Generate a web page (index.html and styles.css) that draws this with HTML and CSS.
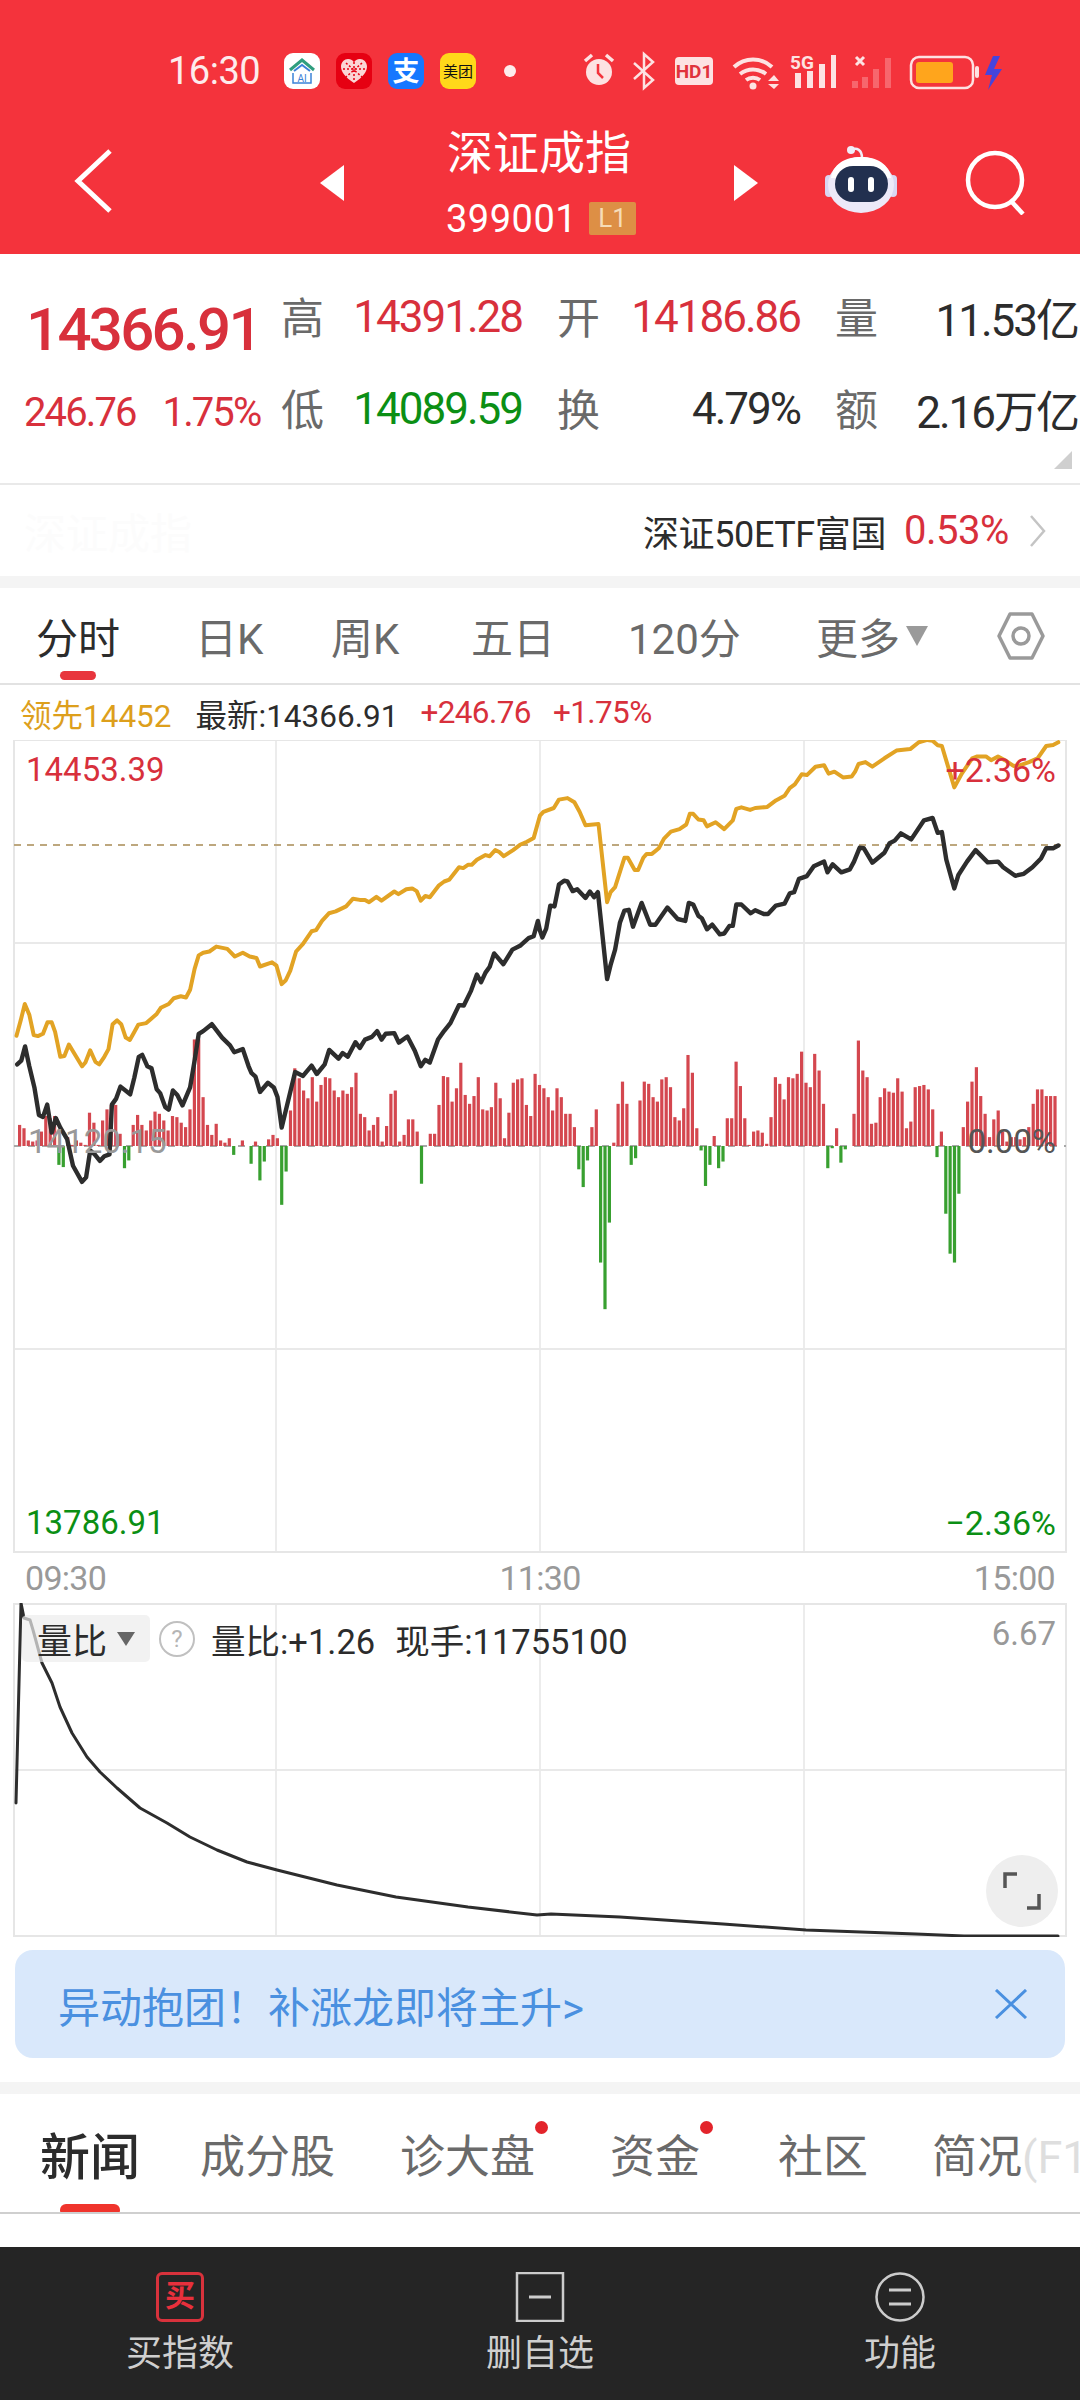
FILE: index.html
```html
<!DOCTYPE html>
<html lang="zh-CN">
<head>
    <meta charset="UTF-8">
    <meta name="viewport" content="width=device-width, initial-scale=1.0">
    <title>深证成指</title>
    <link rel="stylesheet" href="styles.css">
</head>
<body>
    <header class="top">
        <div class="status">
            <span class="status-time">16:30</span>
            <div class="app-icons">
                <svg class="app-icon" viewBox="0 0 36 36"><rect width="36" height="36" rx="9" fill="#fff"/><path d="M6 17 18 7l12 10" fill="none" stroke="#2f9e7e" stroke-width="3"/><path d="M10 18l8-6 8 6" fill="none" stroke="#3b82d8" stroke-width="2"/><path d="M9 20v10h18V20" fill="none" stroke="#3b82d8" stroke-width="1.5"/><text x="18" y="29" class="app-text" font-size="10" fill="#3b82d8">AI</text></svg>
                <svg class="app-icon" viewBox="0 0 36 36"><rect width="36" height="36" rx="9" fill="#e60012"/><path d="M18 30C9 24 5 19 5 13.500 5 9 8.500 6 12 6c3 0 5 1.500 6 3.500C19 7.500 21 6 24 6c3.500 0 7 3 7 7.500C31 19 27 24 18 30Z" fill="#fbd5d5"/><path d="M10 10l16 14M26 10 10 24M18 9v18M7 16h22" stroke="#e60012" stroke-width="1.500" stroke-dasharray="2 2"/></svg>
                <svg class="app-icon" viewBox="0 0 36 36"><rect width="36" height="36" rx="9" fill="#1677ff"/><text x="18" y="28" class="app-text" font-size="27" font-weight="700" fill="#fff">支</text></svg>
                <svg class="app-icon" viewBox="0 0 36 36"><rect width="36" height="36" rx="9" fill="#ffd81a"/><text x="18" y="24" class="app-text" font-size="15" fill="#111">美团</text></svg>
            </div>
            <span class="status-dot"></span>
            <svg class="tray" viewBox="0 0 421 40">
                <!-- alarm -->
                <circle cx="17" cy="21" r="13" fill="#fde2e2"/>
                <path d="M3 10l7-6M31 10l-7-6" stroke="#fde2e2" stroke-width="3.500"/>
                <path d="M16 13v9l5 5" fill="none" stroke="#f4333c" stroke-width="2.500"/>
                <!-- bluetooth -->
                <path d="M52 12l19 17-9 8V3l9 8-19 17" fill="none" stroke="#fde2e2" stroke-width="2.500"/>
                <!-- hd call -->
                <rect x="93" y="6" width="38" height="28" rx="4" fill="#fde2e2"/>
                <text x="112" y="27" class="tray-hd">HD1</text>
                <!-- wifi -->
                <path d="M152 16c11-10 27-10 38 0M158 23c8-6 18-6 26 0M164 29c4-3 10-3 14 0" fill="none" stroke="#fde2e2" stroke-width="4"/>
                <circle cx="171" cy="35" r="3.500" fill="#fde2e2"/>
                <path d="M186 30l6-6 5 6ZM186 33l6 5 5-5Z" fill="#fde2e2"/>
                <!-- 5g signal -->
                <text x="208" y="18" class="tray-5g">5G</text>
                <path d="M213 22h6v15h-6ZM225 20h6v17h-6ZM237 13h6v24h-6ZM249 4h5v33h-5Z" fill="#fde2e2"/>
                <!-- second sim, no service -->
                <path d="M274 6l8 8M282 6l-8 8" stroke="#fde2e2" stroke-width="3"/>
                <path d="M270 30h6v7h-6ZM280 26h6v11h-6ZM291 18h6v19h-6ZM303 7h6v30h-6Z" fill="#fff" fill-opacity=".25"/>
                <!-- battery -->
                <rect x="329" y="6" width="62" height="31" rx="8" fill="none" stroke="#fde2e2" stroke-width="2.500"/>
                <rect x="334" y="11" width="37" height="21" rx="3" fill="#ffa51c"/>
                <rect x="393" y="15" width="4" height="12" rx="2" fill="#fde2e2"/>
                <path d="M411 5l-8 19h7l-4 15 14-21h-8l6-13Z" fill="#4644dc"/>
            </svg>
        </div>
        <div class="nav">
            <svg class="nav-back" viewBox="0 0 50 70"><path d="M40 4 8 34l32 30" fill="none" stroke="#fff" stroke-width="5"/></svg>
            <svg class="nav-arrow" viewBox="0 0 24 36"><path d="M24 0v36L0 18Z" fill="#fff"/></svg>
            <div class="nav-title">
                <h1>深证成指</h1>
                <div class="nav-code">399001 <span class="level-badge">L1</span></div>
            </div>
            <svg class="nav-arrow" viewBox="0 0 24 36"><path d="M0 0v36l24-18Z" fill="#fff"/></svg>
            <svg class="nav-robot" viewBox="0 0 72 68">
                <path d="M26 4c6-3 11 0 11 8" fill="none" stroke="#f0eef8" stroke-width="2.500"/>
                <circle cx="26" cy="4" r="4" fill="#f0eef8"/>
                <rect x="0" y="29" width="8" height="22" rx="4" fill="#d9d6f2"/>
                <rect x="64" y="29" width="8" height="22" rx="4" fill="#d9d6f2"/>
                <ellipse cx="36" cy="39" rx="33" ry="28" fill="#ece9f8"/>
                <path d="M6 32C8 18 20 11 36 11s28 7 30 21Z" fill="#fff"/>
                <rect x="10" y="20" width="53" height="36" rx="18" fill="#22304f"/>
                <rect x="23" y="31" width="6" height="15" rx="3" fill="#fff"/>
                <rect x="43" y="31" width="6" height="15" rx="3" fill="#fff"/>
            </svg>
            <svg class="nav-search" viewBox="0 0 62 66"><circle cx="30" cy="31" r="27" fill="none" stroke="#fff" stroke-width="4.500"/><path d="M46 52l12 13" stroke="#fff" stroke-width="4.500"/></svg>
        </div>
    </header>

    <section class="quote">
        <div class="quote-price">14366.91</div>
        <div class="quote-label">高</div>
        <div class="quote-value up">14391.28</div>
        <div class="quote-label">开</div>
        <div class="quote-value up">14186.86</div>
        <div class="quote-label">量</div>
        <div class="quote-value">11.53亿</div>

        <div class="quote-change"><span>246.76</span><span>1.75%</span></div>
        <div class="quote-label">低</div>
        <div class="quote-value down">14089.59</div>
        <div class="quote-label">换</div>
        <div class="quote-value">4.79%</div>
        <div class="quote-label">额</div>
        <div class="quote-value">2.16万亿</div>
        <span class="quote-fold"></span>
    </section>

    <section class="etf-row">
        <span class="etf-ghost">深证成指</span>
        <span class="etf-name">深证50ETF富国</span>
        <span class="etf-change">0.53%</span>
        <svg class="etf-more" viewBox="0 0 18 34"><path d="M2 2l13 15L2 32" fill="none" stroke="#c4c4c4" stroke-width="2.500"/></svg>
    </section>

    <nav class="period-tabs">
        <a class="period active">分时</a>
        <a class="period">日K</a>
        <a class="period">周K</a>
        <a class="period">五日</a>
        <a class="period">120分</a>
        <a class="period">更多<i class="caret"></i></a>
        <svg class="period-gear" viewBox="0 0 48 50"><path d="M13 3h22l11 22-11 22H13L2 25Z" fill="none" stroke="#9a9a9a" stroke-width="3.500" stroke-linejoin="round"/><circle cx="24" cy="25" r="8" fill="none" stroke="#9a9a9a" stroke-width="3.500"/></svg>
    </nav>

    <div class="legend">
        <span class="legend-lead">领先14452</span>
        <span class="legend-last">最新:14366.91</span>
        <span class="legend-delta up">+246.76</span>
        <span class="legend-delta up">+1.75%</span>
    </div>

    <section class="chart-main">
        <svg id="priceChart" class="chart-svg" viewBox="13 740 1054 813"></svg>
        <span class="tag tag-tl up">14453.39</span>
        <span class="tag tag-tr up">+2.36%</span>
        <span class="tag tag-ml">14120.15</span>
        <span class="tag tag-mr">0.00%</span>
        <span class="tag tag-bl down">13786.91</span>
        <span class="tag tag-br down">−2.36%</span>
    </section>

    <div class="time-axis">
        <span>09:30</span>
        <span>11:30</span>
        <span>15:00</span>
    </div>

    <section class="chart-ratio">
        <svg id="ratioChart" class="chart-svg" viewBox="13 1603 1054 334"></svg>
        <div class="ratio-head">
            <span class="ratio-select">量比<i class="caret caret-dark"></i></span>
            <span class="ratio-help">?</span>
            <span class="ratio-info">量比:+1.26</span>
            <span class="ratio-info">现手:11755100</span>
        </div>
        <span class="ratio-max">6.67</span>
        <span class="ratio-expand">
            <svg viewBox="0 0 38 38"><path d="M14 2H2v14M24 36h12V22" fill="none" stroke="#555" stroke-width="3.500"/></svg>
        </span>
    </section>

    <div class="promo">
        <span class="promo-text">异动抱团！补涨龙即将主升&gt;</span>
        <svg class="promo-close" viewBox="0 0 34 30"><path d="M2 1l30 28M32 1 2 29" stroke="#4a90e0" stroke-width="3"/></svg>
    </div>

    <nav class="news-tabs">
        <a class="news-tab active">新闻</a>
        <a class="news-tab">成分股</a>
        <a class="news-tab dotted">诊大盘</a>
        <a class="news-tab dotted">资金</a>
        <a class="news-tab">社区</a>
        <a class="news-tab">简况<span class="news-fade">(F10)</span></a>
    </nav>

    <footer class="toolbar">
        <a class="tool">
            <span class="tool-buy">买</span>
            <span>买指数</span>
        </a>
        <a class="tool">
            <svg class="tool-icon" viewBox="0 0 50 50"><path d="M2 1h46v48H2Z" fill="none" stroke="#ccc" stroke-width="2.500"/><path d="M14 25h22" stroke="#ccc" stroke-width="3"/></svg>
            <span>删自选</span>
        </a>
        <a class="tool">
            <svg class="tool-icon" viewBox="0 0 50 50"><circle cx="25" cy="25" r="23.500" fill="none" stroke="#ccc" stroke-width="2.500"/><path d="M14 18h22M14 32h22" stroke="#ccc" stroke-width="3"/></svg>
            <span>功能</span>
        </a>
    </footer>

    <script src="chart.js"></script>
</body>
</html>
```

FILE: styles.css
```css
:root {
    --red: #f4333c;
    --up: #d8303c;
    --down: #0b8f14;
    --text: #2c2c2c;
    --muted: #6a6a6a;
    --line: #e9e9e9;
    --band: #f4f4f4;
}

* {
    margin: 0;
    padding: 0;
    box-sizing: border-box;
    font-family: Roboto, "Noto Sans CJK SC", sans-serif;
}

body {
    width: 1080px;
    height: 2400px;
    overflow: hidden;
    background-color: white;
    color: var(--text);
}

.up { color: var(--up); }
.down { color: var(--down); }

/* header */
.top {
    height: 254px;
    background-color: var(--red);
    color: white;
}

.status {
    display: flex;
    align-items: center;
    height: 40px;
    padding-left: 168px;
    transform: translateY(51px);
}

.status-time {
    width: 92px;
    font-size: 38px;
    letter-spacing: -0.5px;
    color: #fdecec;
}

.app-icons {
    display: flex;
    gap: 16px;
    margin-left: 24px;
}

.app-icon {
    width: 36px;
    height: 36px;
}

.app-text {
    text-anchor: middle;
}

.status-dot {
    width: 12px;
    height: 12px;
    margin-left: 28px;
    border-radius: 50%;
    background-color: #fdecec;
}

.tray {
    width: 421px;
    height: 40px;
    margin-left: 66px;
}

.tray-hd {
    font-size: 19px;
    font-weight: 700;
    text-anchor: middle;
    fill: #e0333c;
}

.tray-5g {
    font-size: 19px;
    font-weight: 700;
    fill: #fde2e2;
}

.nav {
    display: flex;
    align-items: center;
    height: 130px;
    margin-top: 77px;
    padding-left: 70px;
}

.nav-back {
    width: 50px;
    height: 70px;
}

.nav-arrow {
    width: 24px;
    height: 36px;
    margin-left: 200px;
    transform: translateY(1px);
}

.nav-title {
    align-self: flex-start;
    width: 390px;
    margin-right: -200px;
    padding-top: 5px;
    text-align: center;
}

.nav-title h1 {
    font-size: 46px;
    font-weight: 400;
    line-height: 62px;
}

.nav-code {
    margin-top: 10px;
    margin-left: 4px;
    font-size: 38px;
    line-height: 50px;
    letter-spacing: 0.5px;
}

.level-badge {
    display: inline-block;
    width: 47px;
    height: 33px;
    margin-left: 2px;
    background-color: #dd8f45;
    border-radius: 2px;
    color: #f6dcb8;
    font-size: 26px;
    line-height: 33px;
    letter-spacing: 0;
    vertical-align: 5px;
}

.nav-robot {
    width: 72px;
    height: 68px;
    margin-top: -4px;
    margin-left: 67px;
}

.nav-search {
    width: 62px;
    height: 66px;
    margin-left: 68px;
}

/* quote table */
.quote {
    position: relative;
    display: grid;
    grid-template-columns: 220px 82px 194px 82px 196px 82px 1fr;
    grid-auto-rows: 92px;
    align-items: center;
    height: 231px;
    padding: 17px 2px 0 26px;
    border-bottom: 2px solid var(--line);
}

.quote-price {
    margin-top: 24px;
    font-size: 60px;
    font-weight: 500;
    letter-spacing: -2.7px;
    white-space: nowrap;
    color: var(--up);
}

.quote-label {
    padding: 0 4px 4px 0;
    font-size: 43px;
    text-align: right;
    color: var(--muted);
}

.quote-value {
    font-size: 44px;
    letter-spacing: -2px;
    text-align: right;
    white-space: nowrap;
}

.quote-change {
    display: flex;
    gap: 27px;
    margin-top: 6px;
    margin-left: -2px;
    font-size: 40px;
    letter-spacing: -1.9px;
    white-space: nowrap;
    color: var(--up);
}

.quote-fold {
    position: absolute;
    right: 8px;
    bottom: 14px;
    border-left: 18px solid transparent;
    border-bottom: 18px solid #cfcfcf;
}

/* related etf */
.etf-row {
    display: flex;
    align-items: center;
    height: 91px;
    padding-left: 24px;
}

.etf-ghost {
    font-size: 42px;
    color: #fcfcfc;
}

.etf-name {
    margin-left: 451px;
    font-size: 36px;
    letter-spacing: -0.4px;
}

.etf-change {
    margin-left: 18px;
    font-size: 40px;
    letter-spacing: -0.5px;
    color: var(--up);
}

.etf-more {
    width: 18px;
    height: 34px;
    margin-left: 20px;
}

/* period tabs */
.period-tabs {
    display: grid;
    grid-template-columns: 159px 136px 140px 157px 188px 179px 50px;
    align-items: center;
    height: 109px;
    padding-left: 36px;
    border-top: 12px solid var(--band);
    border-bottom: 2px solid #e2e2e2;
}

.period {
    position: relative;
    font-size: 42px;
    color: var(--muted);
    white-space: nowrap;
}

.period.active {
    color: var(--text);
}

.period.active::after {
    content: "";
    position: absolute;
    left: 24px;
    top: 66px;
    width: 36px;
    height: 9px;
    border-radius: 5px;
    background-color: #e8353d;
}

.caret {
    display: inline-block;
    margin-left: 6px;
    border-left: 11px solid transparent;
    border-right: 11px solid transparent;
    border-top: 20px solid #9a9a9a;
    vertical-align: 8px;
}

.caret-dark {
    border-left-width: 9px;
    border-right-width: 9px;
    border-top: 14px solid #666;
    margin-left: 10px;
    vertical-align: 6px;
}

.period-gear {
    width: 48px;
    height: 50px;
    margin-left: 2px;
}

.legend {
    display: flex;
    align-items: center;
    gap: 24px;
    height: 55px;
    padding-left: 20px;
    font-size: 31.5px;
}

.legend-lead {
    color: #dd9f1c;
}

.legend-delta {
    margin-left: -2px;
    letter-spacing: -0.6px;
}

/* price chart */
.chart-main {
    position: relative;
    width: 1054px;
    height: 813px;
    margin-left: 13px;
}

.chart-svg {
    display: block;
    width: 100%;
    height: 100%;
}

.tag {
    position: absolute;
    font-size: 33px;
    line-height: 38px;
}

.tag-tl { left: 13px; top: 11px; }
.tag-tr { right: 11px; top: 11px; font-size: 34px; }
.tag-ml { left: 15px; top: 383px; color: #999; }
.tag-mr { right: 11px; top: 383px; color: #555; }
.tag-bl { left: 13px; top: 764px; }
.tag-br { right: 11px; top: 764px; font-size: 34px; }

.time-axis {
    display: flex;
    justify-content: space-between;
    align-items: center;
    height: 50px;
    padding: 0 25px;
    font-size: 34px;
    letter-spacing: -0.7px;
    color: #999;
}

/* ratio chart */
.chart-ratio {
    position: relative;
    width: 1054px;
    height: 334px;
    margin-left: 13px;
}

.ratio-head {
    position: absolute;
    left: 9px;
    top: 12px;
    display: flex;
    align-items: center;
    gap: 20px;
    height: 47px;
}

.ratio-select {
    display: flex;
    align-items: center;
    width: 128px;
    height: 47px;
    padding-left: 15px;
    background-color: rgba(236, 236, 236, 0.7);
    border-radius: 5px;
    font-size: 35px;
    margin-right: -11px;
}

.ratio-help {
    width: 36px;
    height: 36px;
    border: 2px solid #c0c0c0;
    border-radius: 50%;
    text-align: center;
    font-size: 24px;
    line-height: 32px;
    color: #b5b5b5;
    margin-right: -4px;
}

.ratio-info {
    font-size: 34.5px;
    white-space: nowrap;
}

.ratio-max {
    position: absolute;
    right: 11px;
    top: 11px;
    font-size: 33px;
    color: #999;
}

.ratio-expand {
    position: absolute;
    right: 9px;
    top: 252px;
    display: flex;
    align-items: center;
    justify-content: center;
    width: 72px;
    height: 72px;
    border-radius: 50%;
    background-color: #eeeeee;
}

.ratio-expand svg {
    width: 38px;
    height: 38px;
}

/* promo banner */
.promo {
    display: flex;
    align-items: center;
    justify-content: space-between;
    width: 1050px;
    height: 108px;
    margin: 13px 0 24px 15px;
    padding: 0 37px 0 43px;
    border-radius: 18px;
    background-color: #d9e8fb;
}

.promo-text {
    font-size: 42px;
    color: #4a90e0;
}

.promo-close {
    width: 34px;
    height: 30px;
}

/* news tabs */
.news-tabs {
    display: grid;
    grid-template-columns: 160px 200px 210px 168px 154px 1fr;
    align-items: center;
    height: 132px;
    padding-left: 40px;
    border-top: 12px solid var(--band);
    border-bottom: 2px solid #cfcfcf;
    overflow: hidden;
}

.news-tab {
    position: relative;
    font-size: 45px;
    color: var(--muted);
    white-space: nowrap;
}

.news-tab.active {
    font-size: 50px;
    font-weight: 500;
    color: var(--text);
}

.news-tab.active::after {
    content: "";
    position: absolute;
    left: 20px;
    top: 87px;
    width: 60px;
    height: 12px;
    border-radius: 6px;
    background-color: #f0342c;
}

.news-tab.dotted::after {
    content: "";
    position: absolute;
    right: auto;
    top: 0;
    width: 13px;
    height: 13px;
    margin-left: 0;
    border-radius: 50%;
    background-color: #e3242b;
}

.news-fade {
    color: #dedede;
}

/* bottom toolbar */
.toolbar {
    display: grid;
    grid-template-columns: repeat(3, 360px);
    height: 153px;
    margin-top: 33px;
    padding-top: 25px;
    background-color: #252525;
}

.tool {
    display: flex;
    flex-direction: column;
    align-items: center;
    gap: 6px;
    font-size: 36px;
    line-height: 52px;
    color: #cfcfcf;
}

.tool-icon {
    width: 50px;
    height: 50px;
}

.tool-buy {
    width: 48px;
    height: 50px;
    border: 3px solid #d8323c;
    border-radius: 6px;
    color: #e8303c;
    font-size: 30px;
    font-weight: 700;
    line-height: 42px;
    text-align: center;
}
```

FILE: chart.js
```js
// intraday chart: minute bars plus index and leader lines
const NS = 'http://www.w3.org/2000/svg';

// volume delta per minute, morning then afternoon session (negative = sell side)
const volumeAm = [19,16,5,4,5,13,27,25,27,-17,-19,8,1,5,3,1,30,21,1,23,33,37,37,11,-20,-13,19,28,19,14,23,31,29,23,14,27,26,21,17,33,96,96,44,19,10,20,5,3,7,-8,0,5,0,-16,4,-31,-14,6,10,7,-53,-23,32,70,61,50,43,62,40,55,62,61,50,44,50,47,53,66,29,26,14,19,26,4,18,47,50,4,10,24,24,13,-34,0,11,11,37,63,62,40,52,75,46,38,45,62,33,32,35,57,43,7,30,57,60,61,37,27,65];
const volumePm = [55,52,44,32,52,44,29,29,17,-21,-37,-13,17,33,-105,-147,-69,3,38,58,38,-17,-11,41,58,56,44,40,60,62,53,26,23,34,82,66,16,-4,-36,-17,9,-20,-14,25,25,76,54,25,1,13,14,12,2,26,62,56,42,62,61,65,85,57,53,83,68,38,-20,-2,16,-15,-3,0,29,95,68,62,20,21,44,52,49,48,61,49,16,22,53,54,55,51,33,-10,13,-61,-97,-105,-43,17,40,58,71,45,29,8,24,32,13,4,8,8,6,8,17,38,51,51,45,45,45];

// lines are plotted in sampling units, 2.904 per px across and 2.613 per px down
const leaderAm = [48,825,60,785,72,742,85,770,98,823,110,826,125,820,138,790,150,790,160,815,175,880,187,878,200,848,215,870,238,905,248,895,262,863,277,893,288,900,303,880,315,860,327,795,340,785,352,795,365,830,377,836,390,815,402,796,425,792,440,780,455,768,467,752,490,742,505,727,525,722,540,725,552,705,565,650,577,615,590,608,608,605,628,592,660,598,682,618,705,608,725,618,745,622,755,644,790,633,803,642,818,690,830,680,843,655,860,605,880,585,905,552,918,549,935,525,955,505,975,500,1005,487,1025,467,1045,470,1060,470,1072,476,1093,462,1108,472,1145,448,1157,455,1180,442,1197,440,1210,447,1222,472,1235,460,1248,463,1275,432,1290,422,1305,417,1333,385,1345,387,1360,378,1370,378,1385,365,1410,353,1422,356,1438,340,1450,345,1463,356,1490,340,1510,326,1530,318,1550,308,1568,250];
const leaderPm = [10,240,40,230,55,208,80,204,100,215,115,240,132,275,170,272,195,476,205,450,218,437,245,360,255,360,275,392,285,392,300,360,310,350,325,350,345,335,360,310,380,292,405,285,425,273,435,245,445,245,460,260,475,262,485,278,510,267,535,285,560,262,570,232,585,228,610,235,625,230,660,227,685,210,710,198,725,178,740,168,760,142,775,144,800,122,825,118,838,140,855,135,880,150,905,148,915,135,925,115,945,110,965,122,1000,100,1035,80,1075,76,1100,58,1125,52,1140,54,1155,66,1167,68,1203,176,1225,140,1255,100,1270,95,1295,95,1310,105,1330,95,1350,105,1375,120,1395,118,1420,110,1445,100,1470,68,1490,65,1505,58];
const indexAm = [50,900,62,890,73,853,85,905,100,960,113,1032,125,1037,137,1005,150,1078,162,1040,175,1065,195,1095,212,1165,238,1207,250,1195,262,1125,275,1135,290,1152,303,1140,318,1135,325,1005,337,990,350,958,378,978,390,935,403,880,413,875,428,905,440,910,455,965,465,975,480,1012,490,1018,502,968,515,980,530,1007,552,960,565,890,577,820,590,813,615,795,645,830,668,850,680,868,705,860,722,905,730,922,742,932,755,972,778,948,795,960,806,985,818,1065,857,920,880,930,905,903,920,925,943,900,956,862,983,885,995,870,1010,880,1032,842,1045,857,1060,835,1080,828,1095,813,1108,835,1120,820,1145,818,1158,843,1183,827,1205,865,1222,905,1235,888,1248,895,1272,835,1290,812,1308,792,1333,745,1347,746,1368,707,1385,665,1397,685,1410,660,1422,645,1435,610,1462,638,1488,600,1510,590,1535,570,1550,565,1562,525,1568,550];
const indexPm = [7,568,18,545,30,485,42,487,55,430,70,420,80,422,95,447,108,442,132,465,145,448,157,463,168,450,195,677,205,640,218,600,232,530,245,498,258,496,270,540,295,478,320,535,335,535,370,490,400,520,422,525,432,478,445,482,460,512,470,518,485,547,500,535,522,560,535,558,550,538,560,538,570,482,585,482,612,505,625,497,650,507,662,507,685,485,710,480,725,453,738,450,752,415,775,408,795,382,825,370,835,398,850,377,875,398,900,390,912,370,928,334,940,335,965,373,1000,347,1015,322,1030,315,1048,296,1078,312,1115,262,1140,256,1155,295,1167,293,1180,365,1203,440,1215,405,1240,370,1265,340,1300,372,1330,370,1345,385,1380,407,1405,402,1430,385,1455,362,1470,335,1490,335,1505,328];

// volume ratio decays through the day, already in page px
const ratioCurve = [16,1803,21,1603,24,1618,30,1620,33,1630,42,1663,52,1683,60,1707,72,1733,87,1757,100,1772,117,1788,140,1808,167,1823,190,1837,217,1850,247,1862,277,1870,337,1885,396,1897,468,1907,537,1915,551,1914,620,1917,723,1924,806,1930,916,1934,964,1936,1058,1936];

function el(parent, name, attrs) {
    const node = document.createElementNS(NS, name);
    Object.keys(attrs).forEach((key) => node.setAttribute(key, attrs[key]));
    parent.appendChild(node);
    return node;
}

function toPoints(flat, originX) {
    const pts = [];
    for (let i = 0; i < flat.length; i += 2) {
        pts.push((originX + flat[i] / 2.904).toFixed(1) + ',' + (720 + flat[i + 1] / 2.613).toFixed(1));
    }
    return pts;
}

function drawGrid(svg, xs, ys, box) {
    xs.forEach((x) => el(svg, 'line', { x1: x, x2: x, y1: box.top, y2: box.bottom, stroke: '#ececec', 'stroke-width': 2 }));
    ys.forEach((y) => el(svg, 'line', { x1: box.left, x2: box.right, y1: y, y2: y, stroke: '#e9e9e9', 'stroke-width': 2 }));
    el(svg, 'rect', {
        x: box.left, y: box.top, width: box.right - box.left, height: box.bottom - box.top,
        fill: 'none', stroke: '#e6e6e6', 'stroke-width': 2
    });
}

function drawLine(svg, points, color, width) {
    el(svg, 'polyline', {
        points: points.join(' '), fill: 'none', stroke: color,
        'stroke-width': width, 'stroke-linejoin': 'round', 'stroke-linecap': 'round'
    });
}

function drawPriceChart() {
    const svg = document.getElementById('priceChart');
    const zero = 1146;
    drawGrid(svg, [276, 540, 804], [943, 1349], { left: 14, right: 1066, top: 740, bottom: 1552 });

    el(svg, 'line', { x1: 14, x2: 1066, y1: zero, y2: zero, stroke: '#a8a8a8', 'stroke-width': 2, 'stroke-dasharray': '7 7' });
    el(svg, 'line', { x1: 14, x2: 1066, y1: 845, y2: 845, stroke: '#bda77e', 'stroke-width': 2, 'stroke-dasharray': '7 6' });

    const volume = volumeAm.concat(volumePm);
    const step = (1055 - 19.6) / (volume.length - 1);
    volume.forEach((value, i) => {
        if (value === 0) return;
        const h = value * 1.11;
        el(svg, 'rect', {
            x: (18 + i * step).toFixed(1),
            y: value > 0 ? zero - h : zero,
            width: 3.2,
            height: Math.abs(h),
            fill: value > 0 ? '#d4474f' : '#38a030'
        });
    });

    drawLine(svg, toPoints(leaderAm, 0).concat(toPoints(leaderPm, 540)), '#e2a324', 4);
    drawLine(svg, toPoints(indexAm, 0).concat(toPoints(indexPm, 540)), '#2d2d2d', 4.4);
}

function drawRatioChart() {
    const svg = document.getElementById('ratioChart');
    drawGrid(svg, [276, 540, 804], [1770], { left: 14, right: 1066, top: 1604, bottom: 1936 });
    const pts = [];
    for (let i = 0; i < ratioCurve.length; i += 2) {
        pts.push(ratioCurve[i] + ',' + ratioCurve[i + 1]);
    }
    drawLine(svg, pts, '#2d2d2d', 3);
}

drawPriceChart();
drawRatioChart();
```
